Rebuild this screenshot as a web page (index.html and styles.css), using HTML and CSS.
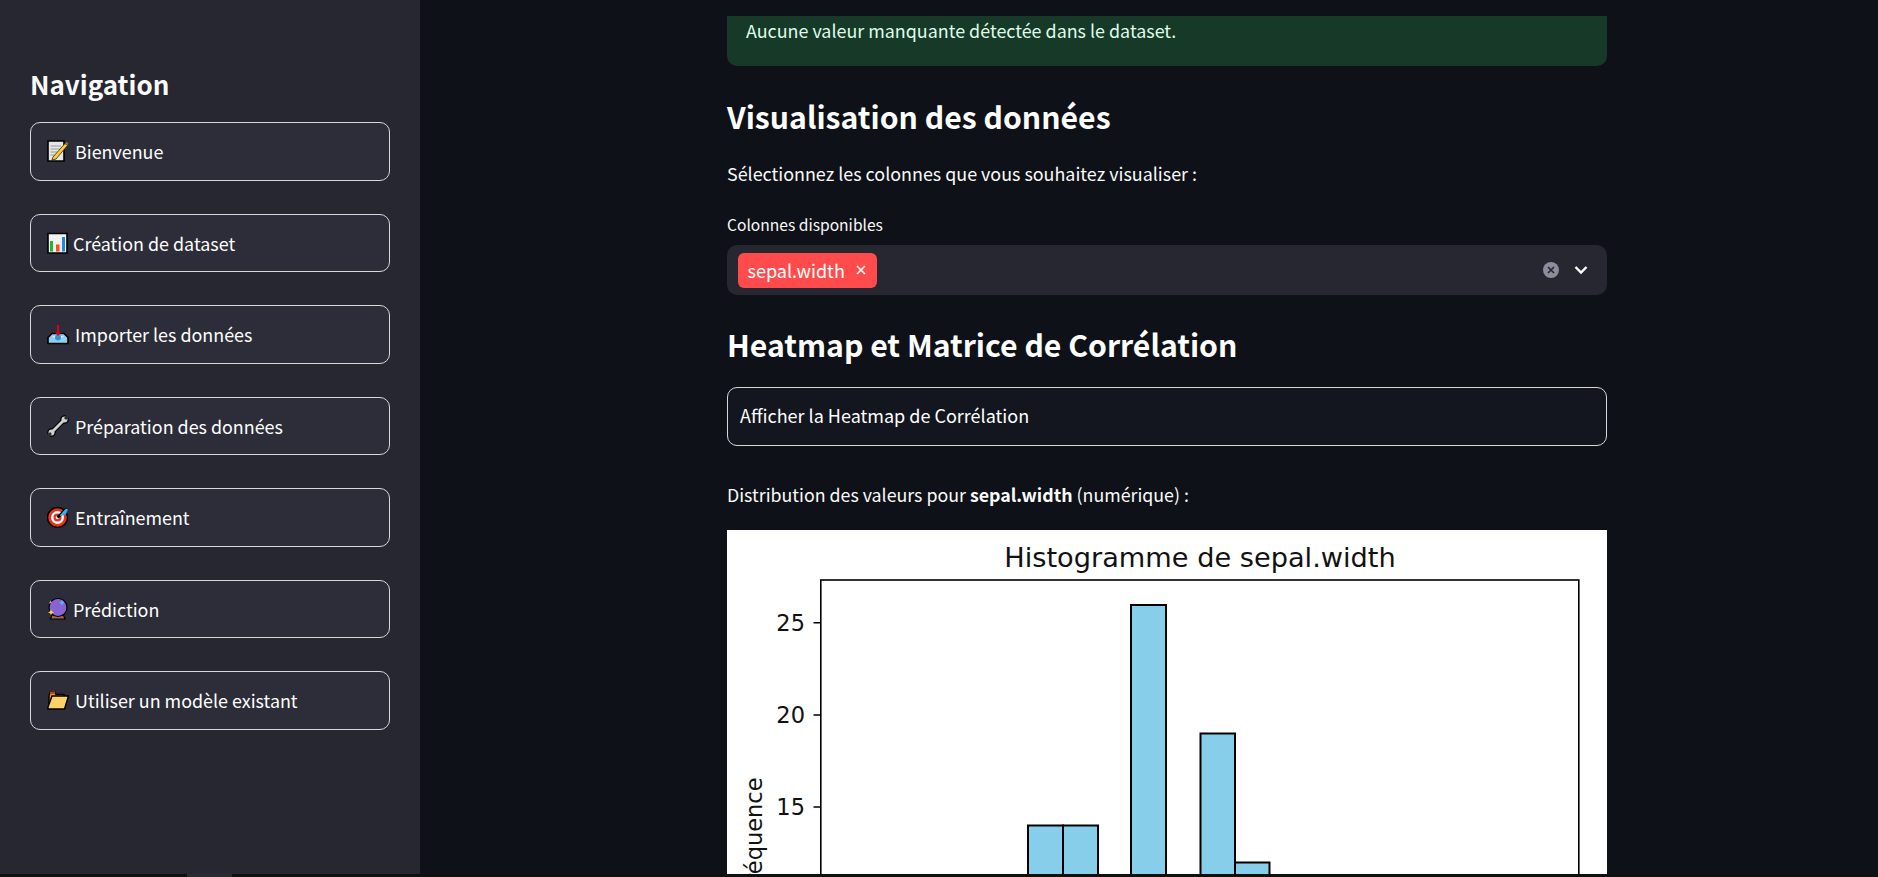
FILE: index.html
```html
<!DOCTYPE html>
<html lang="fr">
<head>
<meta charset="utf-8">
<title>Visualisation des données</title>
<link rel="stylesheet" href="styles.css">
</head>
<body>
<div class="app">
  <aside class="sidebar">
    <h2 class="nav-title">Navigation</h2>
    <nav class="nav-list">
      <a class="nav-btn"><svg class="emoji" viewBox="0 0 22 22"><path d="M1 1H17V21H1Z" fill="#e6e6e6" stroke="#000" stroke-width="1.6"/><path d="M3.500 6H14M3.500 9H14M3.500 12H10M3.500 15H8" stroke="#9a9a9a" stroke-width="1"/><path d="M6 17L18 3.500 20.500 5.500 9 19 5 20Z" fill="#ffc83d" stroke="#3a2a00" stroke-width=".8"/><path d="M18 3.500L19.500 1.800 21.500 3.500 20.500 5.500Z" fill="#8a6a5a"/></svg><span>Bienvenue</span></a>
      <a class="nav-btn"><svg class="emoji narrow" viewBox="0 0 21 22"><path d="M1 1.500H20V21H1Z" fill="#f2f2f2" stroke="#000" stroke-width="1.600"/><path d="M3 9H6V19.500H3Z" fill="#1fb82e"/><path d="M9 12.500H12.500V19.500H9Z" fill="#f4511e"/><path d="M15 5H18V19.500H15Z" fill="#1e88e5"/></svg><span>Création de dataset</span></a>
      <a class="nav-btn"><svg class="emoji" viewBox="0 0 22 22"><path d="M1 14.500L5 10.500H17L21 14.500V20.500H1Z" fill="#8fd0f0" stroke="#000" stroke-width="1.600"/><path d="M5 13H17L14 15.500H8Z" fill="#cfeeff"/><circle cx="11" cy="14.500" r="3" fill="#3a8fd8"/><path d="M11 2V12" stroke="#d8001c" stroke-width="2.200"/><path d="M8 9L11 13 14 9Z" fill="#d8001c"/></svg><span>Importer les données</span></a>
      <a class="nav-btn"><svg class="emoji" viewBox="0 0 22 22"><path d="M4.500 17.500L17.500 4.500" stroke="#000" stroke-width="5"/><circle cx="4.500" cy="17.500" r="4.300" fill="#000"/><circle cx="17.500" cy="4.500" r="4.300" fill="#000"/><path d="M4.500 17.500L17.500 4.500" stroke="#cfcfcf" stroke-width="2.800"/><circle cx="4.500" cy="17.500" r="3" fill="#cfcfcf"/><circle cx="17.500" cy="4.500" r="3" fill="#cfcfcf"/><path d="M18 4L22 0" stroke="#2c2d38" stroke-width="3"/><path d="M4 18L0 22" stroke="#2c2d38" stroke-width="2.500"/></svg><span>Préparation des données</span></a>
      <a class="nav-btn"><svg class="emoji" viewBox="0 0 22 22"><circle cx="10.500" cy="11.500" r="10" fill="#e8301c" stroke="#000" stroke-width="1.400"/><circle cx="10.500" cy="11.500" r="6.500" fill="#fff"/><circle cx="10.500" cy="11.500" r="4" fill="#e8301c"/><circle cx="10.500" cy="11.500" r="1.800" fill="#fff"/><path d="M10.500 11.500L20 2.500" stroke="#000" stroke-width="3"/><path d="M12.500 9.500L19 2.500 21 3.500 19 8 14 10Z" fill="#29b6f6"/></svg><span>Entraînement</span></a>
      <a class="nav-btn"><svg class="emoji narrow" viewBox="0 0 21 22"><path d="M5 17H16.500L18 21H3.500Z" fill="#a0694a" stroke="#000" stroke-width="1.200"/><circle cx="11" cy="9.500" r="9" fill="#8a63d2" stroke="#000" stroke-width="1.200"/><path d="M3.500 2.500L5 5 2 5.500Z" fill="#e58ad0"/><path d="M15 2.500V7M13 4.700H17" stroke="#4fc3f7" stroke-width="1.200"/><path d="M4 11.500L5 13.500 7 14.300 5 15.200 4 17 3 15.200 1 14.300 3 13.500Z" fill="#ffd83d"/></svg><span>Prédiction</span></a>
      <a class="nav-btn"><svg class="emoji" viewBox="0 0 22 22"><path d="M2 17V6.500L3 3.500H8L9 5.500H17V7.500" fill="#e8930c" stroke="#000" stroke-width="1.400"/><path d="M3 3.500H8" stroke="#d8301c" stroke-width="1.600"/><path d="M1 20V18L5 7H21.500L17.500 20Z" fill="#ffd269" stroke="#000" stroke-width="1.400"/></svg><span>Utiliser un modèle existant</span></a>
    </nav>
  </aside>
  <main class="main">
    <div class="content">
      <div class="alert">Aucune valeur manquante détectée dans le dataset.</div>
      <h2 class="heading first">Visualisation des données</h2>
      <p class="para select-intro">Sélectionnez les colonnes que vous souhaitez visualiser :</p>
      <label class="field-label">Colonnes disponibles</label>
      <div class="multiselect">
        <span class="tag">sepal.width<svg class="tag-x" viewBox="0 0 10 10"><path d="M1 1L9 9M9 1L1 9"/></svg></span>
        <span class="ms-icons">
          <svg class="clear" viewBox="0 0 16 16"><circle cx="8" cy="8" r="8" fill="#8b8d9c"/><path d="M5 5L11 11M11 5L5 11" stroke="#262730" stroke-width="1.700"/></svg>
          <svg class="chevron" viewBox="0 0 14 10"><path d="M1.500 2L7 7.500 12.500 2" fill="none" stroke="#fff" stroke-width="2.400"/></svg>
        </span>
      </div>
      <h2 class="heading second">Heatmap et Matrice de Corrélation</h2>
      <button class="wide-btn">Afficher la Heatmap de Corrélation</button>
      <p class="para dist">Distribution des valeurs pour <strong>sepal.width</strong> (numérique) :</p>
      <svg class="chart" viewBox="0 0 880 344" preserveAspectRatio="xMinYMin slice">
        <rect class="chart-bg" width="880" height="344"/>
        <text class="chart-title" x="473" y="37" text-anchor="middle">Histogramme de sepal.width</text>
        <rect class="bar" x="301" y="295.500" width="35" height="80"/>
        <rect class="bar" x="336" y="295.500" width="35" height="80"/>
        <rect class="bar" x="404" y="75" width="35" height="300"/>
        <rect class="bar" x="473.500" y="203.500" width="34.500" height="170"/>
        <rect class="bar" x="508" y="332.500" width="34.500" height="50"/>
        <rect class="axes" x="93.800" y="50" width="758" height="320"/>
        <path class="tick" d="M86.500 92.700H93.800M86.500 185H93.800M86.500 277H93.800"/>
        <text class="chart-num" x="78" y="100.500" text-anchor="end">25</text>
        <text class="chart-num" x="78" y="193" text-anchor="end">20</text>
        <text class="chart-num" x="78" y="285" text-anchor="end">15</text>
        <text class="chart-num" transform="translate(35 247.500) rotate(-90)" text-anchor="end">Fréquence</text>
      </svg>
    </div>
  </main>
</div>
<div class="scrollbar"><span class="thumb"></span></div>
</body>
</html>
```

FILE: styles.css
```css
* { box-sizing: border-box; }

html, body {
  margin: 0;
  height: 100%;
  overflow: hidden;
  background: #0e1117;
  color: #fafafa;
  font-family: "Noto Sans CJK SC", "Noto Sans", sans-serif;
  font-size: 16px;
}

.app {
  display: flex;
  height: 874px;
}

.sidebar {
  flex: 0 0 420px;
  background: #262730;
  padding: 65px 30px 0;
}

.nav-title {
  margin: 0 0 20px;
  font-size: 26px;
  line-height: 37px;
  font-weight: 600;
  color: #fafafa;
}

.nav-list {
  display: flex;
  flex-direction: column;
  gap: 33px;
}

.nav-btn {
  display: flex;
  align-items: center;
  height: 58.500px;
  padding: 0 16px;
  background: #2c2d38;
  border: 1px solid #d8d8da;
  border-radius: 10px;
  color: #fff;
  font-size: 17.900px;
}

.emoji {
  flex: none;
  width: 22px;
  height: 22px;
  margin-right: 6px;
}

.emoji.narrow {
  width: 21px;
  margin-right: 5px;
}

.main {
  flex: 1;
  overflow: hidden;
}

.content {
  width: 880px;
  margin-left: 307px;
  padding-top: 16px;
}

.alert {
  height: 50px;
  padding: 3px 19px 0;
  background: #173928;
  border-radius: 0 0 10px 10px;
  color: #dffde9;
  font-size: 17.900px;
  line-height: 23px;
}

.heading {
  margin: 0;
  font-size: 30.200px;
  line-height: 46px;
  font-weight: 600;
  color: #fff;
}

.heading.first { margin-top: 27px; }
.heading.second { margin-top: 26px; }

.para {
  margin: 0;
  font-size: 17.900px;
  line-height: 24px;
  color: #fafafa;
}

.select-intro { margin-top: 22px; }

.field-label {
  display: block;
  margin-top: 28px;
  font-size: 15.600px;
  line-height: 22px;
}

.multiselect {
  display: flex;
  align-items: center;
  justify-content: space-between;
  height: 50px;
  margin-top: 10px;
  padding: 0 19px 0 11px;
  background: #262730;
  border-radius: 10px;
}

.tag {
  display: flex;
  align-items: center;
  height: 35px;
  padding: 0 11px 0 9.500px;
  background: #ff4b4b;
  border-radius: 6px;
  color: #fff;
  font-size: 18px;
}

.tag-x {
  width: 10px;
  height: 10px;
  margin-left: 11px;
  fill: none;
  stroke: #fff;
  stroke-width: 1.600;
}

.ms-icons {
  display: flex;
  align-items: center;
  gap: 15px;
}

.clear { width: 16px; height: 16px; }
.chevron { width: 14px; height: 10px; }

.wide-btn {
  display: block;
  width: 100%;
  height: 59px;
  margin-top: 20px;
  padding: 0 12px 4px;
  background: #13161e;
  border: 1px solid #d8d8da;
  border-radius: 10px;
  color: #fff;
  font: inherit;
  font-size: 18px;
  text-align: left;
}

.dist {
  margin-top: 36px;
  font-size: 17.800px;
}
.dist strong { font-weight: 700; }

.chart {
  display: block;
  width: 880px;
  height: 344px;
  margin-top: 24px;
}

.chart-bg { fill: #fff; }
.bar { fill: #87ceeb; stroke: #000; stroke-width: 2; }
.axes { fill: none; stroke: #000; stroke-width: 1.600; }
.tick { fill: none; stroke: #000; stroke-width: 1.600; }

.chart-title {
  font-family: "DejaVu Sans", sans-serif;
  font-size: 27.200px;
  fill: #111;
}

.chart-num {
  font-family: "DejaVu Sans", sans-serif;
  font-size: 22.500px;
  fill: #111;
}

.scrollbar {
  height: 3px;
  background: #10110d;
  padding-left: 187px;
}

.thumb {
  display: block;
  width: 45px;
  height: 3px;
  background: #2c2d2b;
}
```
